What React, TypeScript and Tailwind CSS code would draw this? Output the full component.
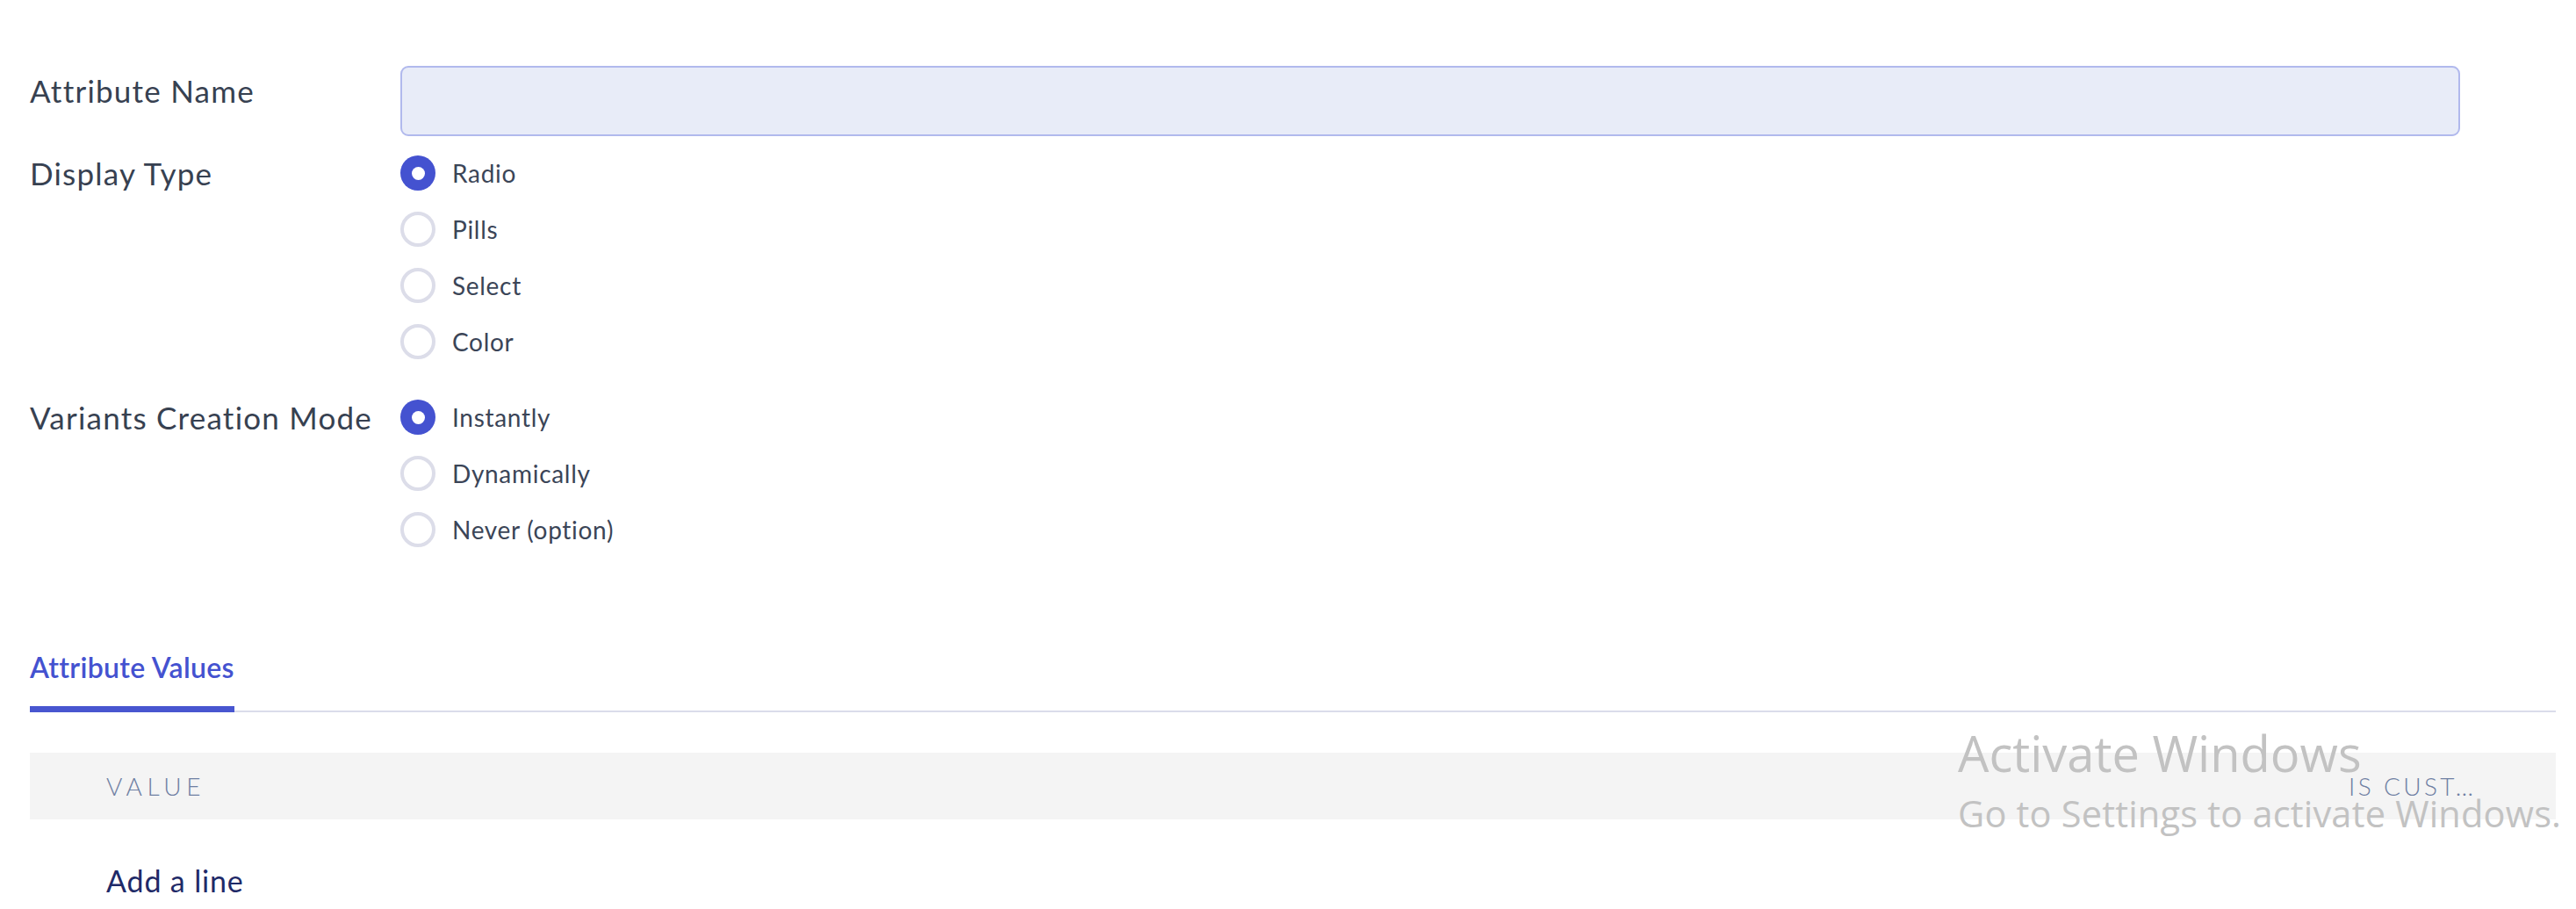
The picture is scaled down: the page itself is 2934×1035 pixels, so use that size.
import { useState } from 'react'

const displayTypes = ['Radio', 'Pills', 'Select', 'Color']
const creationModes = ['Instantly', 'Dynamically', 'Never (option)']

function Radio({ checked, label, onClick }: { checked: boolean; label: string; onClick: () => void }) {
  return (
    <button type="button" onClick={onClick} className="flex items-center h-[64px] gap-[19px] text-left">
      {checked ? (
        <span className="w-[40px] h-[40px] rounded-full bg-[#4452d0] flex items-center justify-center">
          <span className="w-[15px] h-[15px] rounded-full bg-white" />
        </span>
      ) : (
        <span className="w-[40px] h-[40px] rounded-full border-[4px] border-[#dcdde9] bg-white" />
      )}
      <span className="text-[28px] tracking-[0.025em] text-[#3b4557]">{label}</span>
    </button>
  )
}

export default function App() {
  const [name, setName] = useState('')
  const [display, setDisplay] = useState('Radio')
  const [mode, setMode] = useState('Instantly')

  return (
    <div className="relative w-full h-[1035px] bg-white overflow-hidden font-['Lato','Liberation_Sans',sans-serif]">
      <div className="pl-[34px] pr-[23px] pt-[75px]">
        {/* form */}
        <div className="flex">
          <div className="w-[422px] shrink-0 text-[35px] tracking-[0.035em] leading-[56px] text-[#374151]">Attribute Name</div>
          <input
            value={name}
            onChange={e => setName(e.target.value)}
            className="w-[2346px] h-[80px] rounded-[9px] border-2 border-[#b1b9ed] bg-[#e8ecf8] px-4 text-[27px] outline-none"
          />
        </div>

        <div className="flex mt-[10px]">
          <div className="w-[422px] shrink-0 text-[35px] tracking-[0.035em] leading-[64px] text-[#374151]">Display Type</div>
          <div className="flex flex-col">
            {displayTypes.map(t => (
              <Radio key={t} label={t} checked={display === t} onClick={() => setDisplay(t)} />
            ))}
          </div>
        </div>

        <div className="flex mt-[22px]">
          <div className="w-[422px] shrink-0 text-[35px] tracking-[0.035em] leading-[64px] text-[#374151] whitespace-nowrap">Variants Creation Mode</div>
          <div className="flex flex-col">
            {creationModes.map(m => (
              <Radio key={m} label={m} checked={mode === m} onClick={() => setMode(m)} />
            ))}
          </div>
        </div>

        {/* tabs */}
        <div className="mt-[105px] flex border-b-2 border-[#dadcea]">
          <div className="-mb-[2px] pb-[24px] border-b-[7px] border-[#4856d0] text-[32px] tracking-[0.01em] leading-[40px] font-semibold text-[#4452d0]">
            Attribute Values
          </div>
        </div>

        {/* table */}
        <div className="mt-[46px]">
          <div className="h-[76px] bg-[#f4f4f4] flex items-center pl-[87px] text-[28px] font-light text-[#6f80a3]">
            <div className="flex-1 tracking-[0.2em]">VALUE</div>
            <div className="w-[236px] whitespace-nowrap tracking-[0.12em]">IS CUST…</div>
          </div>
          <div className="pl-[87px] pt-[50px] text-[34px] tracking-[0.025em] leading-[40px] text-[#1f2a68]">
            <button type="button">Add a line</button>
          </div>
        </div>
      </div>

      {/* windows watermark */}
      <div className="absolute left-[2230px] top-[825px] text-[#c2c2c2] font-['Open_Sans',sans-serif] pointer-events-none whitespace-nowrap">
        <div className="text-[56px] leading-[64px]">Activate Windows</div>
        <div className="text-[41.5px] tracking-[0.005em] leading-[50px] mt-[12px]">Go to Settings to activate Windows.</div>
      </div>
    </div>
  )
}
